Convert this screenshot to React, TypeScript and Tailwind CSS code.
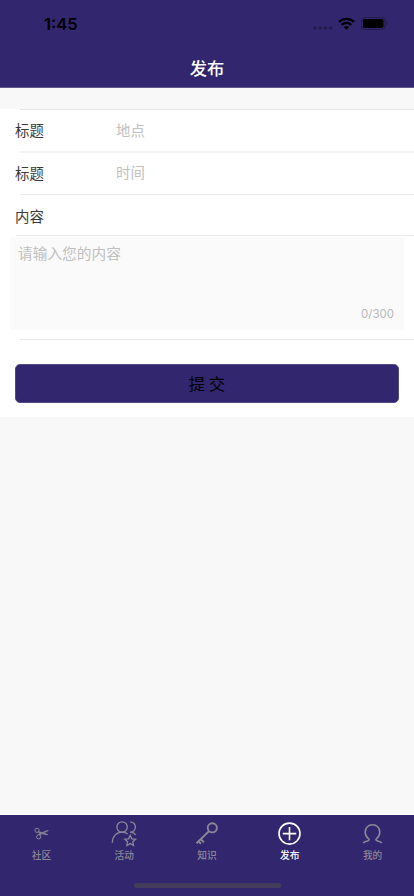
import React from "react"

const tabs = [
  { label: "社区", icon: <ScissorsIcon /> },
  { label: "活动", icon: <PeopleIcon /> },
  { label: "知识", icon: <KeyIcon /> },
  { label: "发布", icon: <PlusIcon />, active: true },
  { label: "我的", icon: <UserIcon /> },
]

function ScissorsIcon() {
  return (
    <svg className="size-[30px]" viewBox="0 0 30 30" fill="none" stroke="currentColor" strokeWidth="1">
      <circle cx="11" cy="12.3" r="2.1" />
      <circle cx="12.7" cy="18.8" r="2.1" />
      <path d="M12.8 13.6 22 16.5l-2.6.2-6.8-2.1zM13.6 17l8.8-4.4-2.4.3-7.2 3.1z" fill="currentColor" strokeWidth=".6" />
    </svg>
  )
}

function PeopleIcon() {
  return (
    <svg className="size-[30px]" viewBox="0 0 30 30" fill="none" stroke="currentColor" strokeWidth="1.3">
      <circle cx="13.1" cy="9" r="5.2" />
      <path d="M3.3 24.7c0-6.2 4-10.5 9.8-10.5 2.2 0 4.1.7 5.6 1.9" />
      <path d="M21.1 3.8c3 0 5.3 2.3 5.3 5.2s-2.3 5.2-5.3 5.2c2.4.1 4.4.9 5.7 2.6" />
      <path d="M21.2 17.3l1.6 3.5 3.8.4-2.8 2.6.8 3.7-3.4-1.9-3.4 1.9.8-3.7-2.8-2.6 3.8-.4z" />
    </svg>
  )
}

function KeyIcon() {
  return (
    <svg className="size-[30px]" viewBox="0 0 30 30" fill="none" stroke="currentColor" strokeWidth="1.9">
      <circle cx="20.3" cy="9.8" r="4.6" />
      <path d="M17 13.1 4.5 25.3M8.6 21.2l3.4 3M6.3 23.4l2.7 2.4" />
    </svg>
  )
}

function PlusIcon() {
  return (
    <svg className="size-[30px]" viewBox="0 0 30 30" fill="none" stroke="currentColor" strokeWidth="1.6">
      <circle cx="14.5" cy="15.6" r="10.5" />
      <path d="M14.5 8.9v13.4M7.8 15.6h13.4" />
    </svg>
  )
}

function UserIcon() {
  return (
    <svg className="size-[30px]" viewBox="0 0 30 30" fill="none" stroke="currentColor" strokeWidth="1.6">
      <path d="M5.1 24.9c1.4-1.2 3-1.6 4.4-2 1.7-.5 2.1-1.4.9-2.3-2-1.6-3.2-3.8-3.2-6.4 0-4.5 3.1-7.5 7.3-7.5s7.3 3 7.3 7.5c0 2.6-1.2 4.8-3.2 6.4-1.2.9-.8 1.8.9 2.3 1.4.4 3 .8 4.4 2" />
    </svg>
  )
}

const StatusBar = () => (
  <div className="flex h-12 items-center justify-between pl-[44px] pr-[26px] text-black">
    <span className="font-['Inter',sans-serif] text-[16.5px] font-semibold leading-none">1:45</span>
    <div className="flex items-center">
      <svg className="mt-[8px] h-1 w-[20px]" viewBox="0 0 20 4" fill="#231b50">
        <circle cx="2" cy="2" r="1.8" />
        <circle cx="7.2" cy="2" r="1.8" />
        <circle cx="12.4" cy="2" r="1.8" />
        <circle cx="17.6" cy="2" r="1.8" />
      </svg>
      <svg className="-mt-px ml-[5px] h-[13px] w-[17px]" viewBox="0 0 17 13">
        <path d="M1 4.9a10.6 10.6 0 0 1 15 0M3.7 7.9a6.8 6.8 0 0 1 9.6 0" fill="none" stroke="#000" strokeWidth="2.3" />
        <path d="M8.5 12.8 5.9 10.2a3.8 3.8 0 0 1 5.2 0z" />
      </svg>
      <svg className="-mt-px ml-[6px] h-[13px] w-[27px]" viewBox="0 0 27 13">
        <rect x=".5" y=".5" width="23.5" height="12" rx="3.4" fill="none" stroke="#211a4b" />
        <rect x="2" y="2" width="20.5" height="9" rx="1.8" />
        <path d="M25.4 4.5c1.3.6 1.3 3.4 0 4z" fill="#211a4b" />
      </svg>
    </div>
  </div>
)

const App = () => {
  return (
    <main className="flex h-[896px] w-[414px] flex-col overflow-hidden bg-[#f8f8f8] font-['Noto_Sans_CJK_SC',sans-serif]">
      <header className="h-[88px] shrink-0 border-b border-[#62588f] bg-[#32266f]">
        <StatusBar />
        <h1 className="text-center text-[17.3px] font-medium leading-[39px] text-white">发布</h1>
      </header>

      <form className="mt-[21px] flex h-[308px] shrink-0 flex-col bg-white text-[14.4px] text-[#3a3a3a]">
        <div className="ml-5 h-px bg-[#e6e6e6]" />
        <label className="flex h-[41px] items-center pl-[15px]">
          <span className="w-[101px] pb-px">标题</span>
          <input className="min-w-0 flex-1 pb-px outline-none placeholder:text-[#c0c0c0]" placeholder="地点" />
        </label>
        <div className="ml-5 h-[2px] bg-[#f1f1f1]" />
        <label className="flex h-[41px] items-center pl-[15px]">
          <span className="w-[101px] pb-[2px]">标题</span>
          <input className="min-w-0 flex-1 pb-[3px] outline-none placeholder:text-[#c0c0c0]" placeholder="时间" />
        </label>
        <div className="ml-5 h-px bg-[#e9e9e9]" />
        <div className="flex h-10 items-center pl-[15px] pt-px">内容</div>
        <div className="ml-4 h-px bg-[#e8e8e8]" />
        <div className="mx-[10px] mt-px flex h-[93px] flex-col bg-[#fafafa]">
          <textarea
            className="w-full flex-1 resize-none px-2 pt-[5px] text-[14.7px] leading-[22px] outline-none placeholder:text-[#c0c0c0]"
            placeholder="请输入您的内容"
          />
          <span className="pb-[7px] pr-[10px] text-right font-['Inter',sans-serif] text-[11.5px] leading-[17px] text-[#b9b9b9]">0/300</span>
        </div>
        <div className="ml-5 mt-[9px] h-px bg-[#e9e9e9]" />
        <button
          type="button"
          className="mx-[15px] mt-6 h-[39px] rounded-[5px] border border-[#534984] bg-[#32266f] pb-px text-[16.4px] leading-none text-black"
        >
          提 交
        </button>
      </form>

      <nav className="mt-auto h-[82px] shrink-0 border-t border-white bg-[#32266f]">
        <div className="flex pt-[3px]">
          {tabs.map((tab) => (
            <div
              key={tab.label}
              className={`flex flex-1 flex-col items-center ${tab.active ? "text-white" : "text-[#8c8795]"}`}
            >
              {tab.icon}
              <span className="text-[9.7px] font-medium leading-[15px]">{tab.label}</span>
            </div>
          ))}
        </div>
        <div className="mx-auto mt-[20px] h-[5px] w-[147px] rounded-full bg-[#443c5b]" />
      </nav>
    </main>
  )
}

export default App
